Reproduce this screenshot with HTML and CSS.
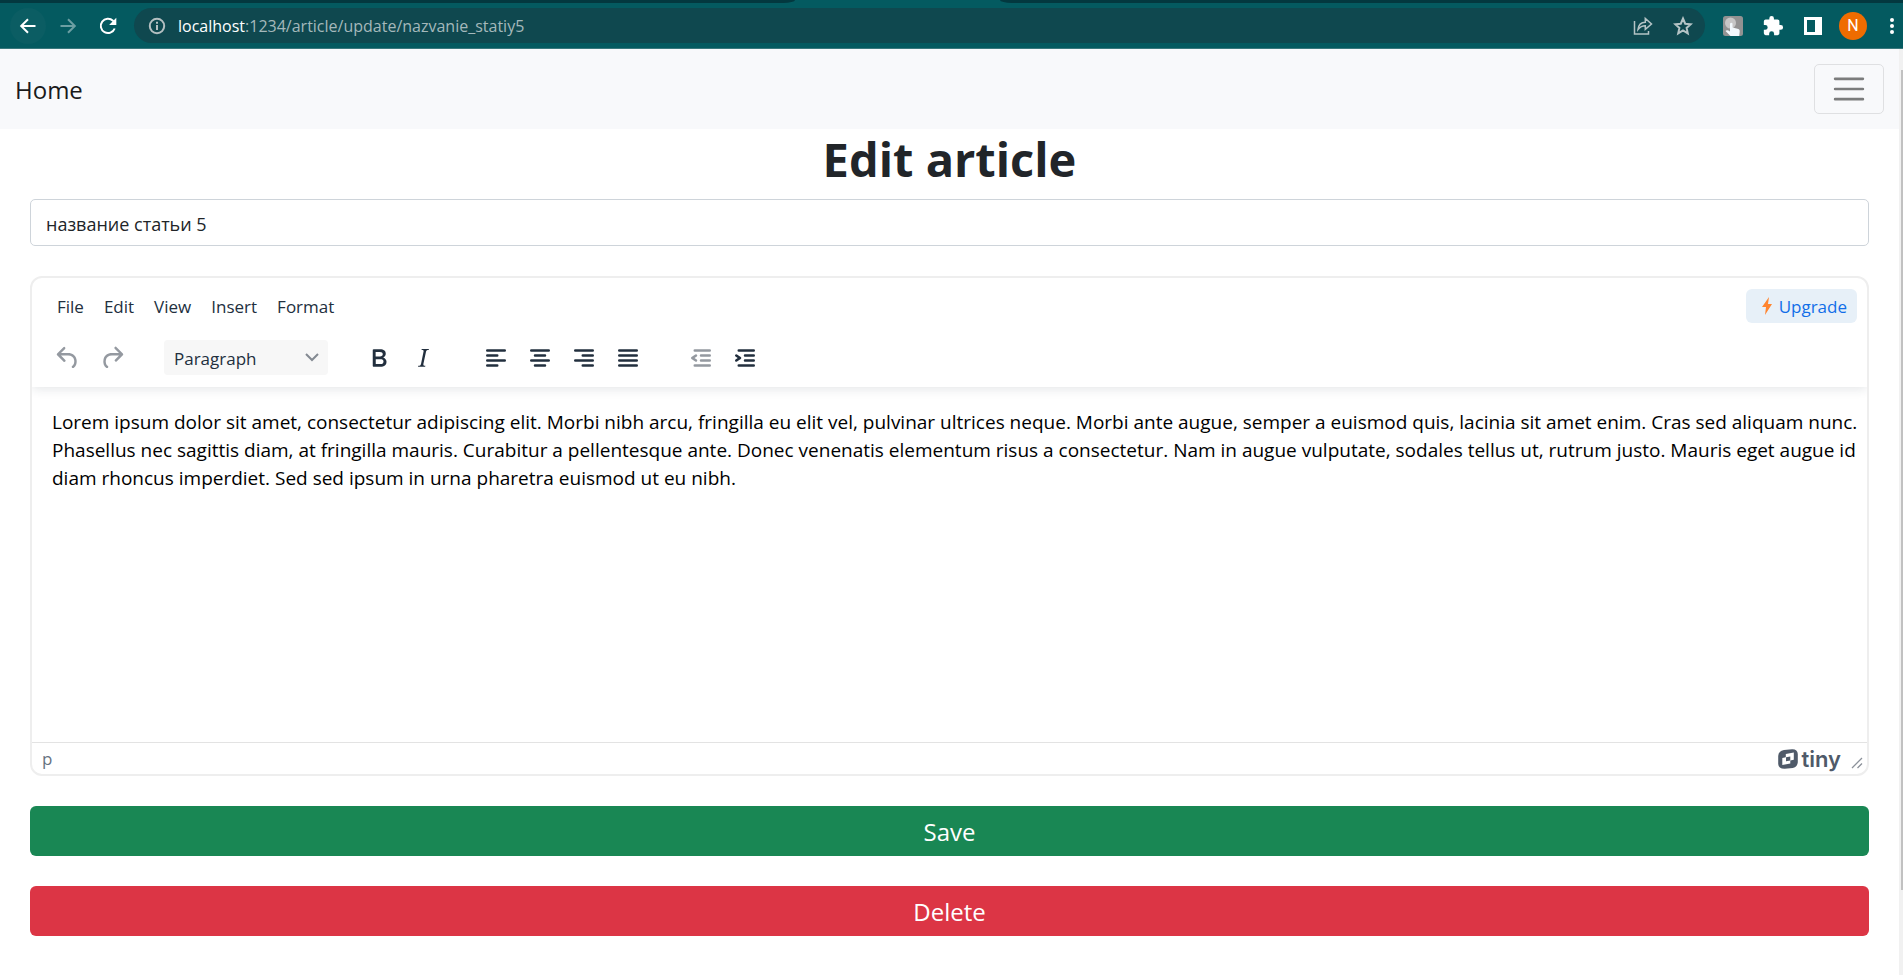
FILE: index.html
```html
<!DOCTYPE html>
<html lang="en">
<head>
<meta charset="utf-8">
<title>Edit article</title>
<link rel="stylesheet" href="styles.css">
</head>
<body>
<header class="browser">
  <div class="tabstrip"><span class="tab-left"></span><span class="tab-right"></span></div>
  <div class="chrome-bar">
    <button class="chrome-btn back" aria-label="Back"><svg width="20" height="20" viewBox="0 0 20 20"><path d="M17.500 10H4M10 3.200 3.200 10l6.800 6.800"/></svg></button>
    <button class="chrome-btn forward" aria-label="Forward"><svg width="20" height="20" viewBox="0 0 20 20"><path d="M2.500 10H16M10 3.200 16.800 10 10 16.800"/></svg></button>
    <button class="chrome-btn reload" aria-label="Reload"><svg width="20" height="20" viewBox="0 0 20 20"><path d="M16.700 12.500a7.200 7.200 0 1 1-1.700-7.800L17 6.500"/><path class="solid" d="M18.300 1.800v7.200h-7.200z"/></svg></button>
    <div class="omnibox">
      <svg class="info" width="18" height="18" viewBox="0 0 18 18"><circle cx="9" cy="9" r="7.200"/><path d="M9 8v5M9 4.800v2"/></svg>
      <span class="url"><b>localhost</b>:1234/article/update/nazvanie_statiy5</span>
      <button class="omni-btn" aria-label="Share"><svg width="20" height="20" viewBox="0 0 20 20"><path d="M1.500 5v13h14v-3M5 13.500C5.500 8.500 8.500 6.300 12.300 6.200V2.500L18.500 8l-6.200 5.300V9.800C9 9.800 7 11 5 13.500z"/></svg></button>
      <button class="omni-btn" aria-label="Bookmark"><svg width="20" height="20" viewBox="0 0 20 20"><path d="m10 2.500 2.200 5.200 5.600.5-4.200 3.700 1.200 5.500L10 14.500l-4.800 2.900 1.200-5.500-4.200-3.700 5.600-.5z"/></svg></button>
    </div>
    <button class="ext-btn" aria-label="Click extension"><svg width="22" height="22" viewBox="0 0 22 22"><rect x="1" y="1" width="20" height="20" rx="2.500" fill="#929292"/><circle cx="8.500" cy="8" r="5.500" fill="#c6c6c6"/><path d="M8 8.500q1.500-1.500 2.500 0v4l6 1.500q1.500.5 1.200 2.500l-.5 4.500H8.500L3.500 16q1.500-1.500 4.500.5z" fill="#f1f8fc"/></svg></button>
    <button class="ext-btn" aria-label="Extensions"><svg width="22" height="22" viewBox="0 0 24 24"><path fill="#fff" d="M20.500 11H19V7a2 2 0 0 0-2-2h-4V3.500a2.500 2.500 0 0 0-5 0V5H4a2 2 0 0 0-2 2v3.800h1.500a2.700 2.700 0 0 1 0 5.400H2V20a2 2 0 0 0 2 2h3.800v-1.500a2.700 2.700 0 0 1 5.400 0V22H17a2 2 0 0 0 2-2v-4h1.500a2.500 2.500 0 0 0 0-5z"/></svg></button>
    <button class="ext-btn" aria-label="Side panel"><svg width="18" height="18" viewBox="0 0 18 18"><path fill="#fff" fill-rule="evenodd" d="M0 0h18v18H0zM3 3v12h8V3z"/></svg></button>
    <button class="avatar">N</button>
    <button class="kebab" aria-label="Menu"><svg width="6" height="18" viewBox="0 0 6 18"><g fill="#fff"><circle cx="3" cy="3" r="2"/><circle cx="3" cy="9" r="2"/><circle cx="3" cy="15" r="2"/></g></svg></button>
  </div>
</header>
<div class="viewport">
  <div class="page">
    <nav class="navbar">
      <a class="brand" href="#">Home</a>
      <button class="toggler" aria-label="Toggle navigation"><svg width="38" height="38" viewBox="0 0 30 30"><path stroke="#7b7c7c" stroke-linecap="round" stroke-width="2" d="M4 7h22M4 15h22M4 23h22"/></svg></button>
    </nav>
    <main class="content">
      <h1 class="title">Edit article</h1>
      <input class="name-input" type="text" aria-label="Article name" value="название статьи 5">
      <section class="editor">
        <div class="editor-head">
          <div class="menubar">
            <button>File</button><button>Edit</button><button>View</button><button>Insert</button><button>Format</button>
            <a class="upgrade" href="#"><svg width="10" height="18" viewBox="0 0 10 18"><path fill="#ff8530" d="M7 0 0 10h4l-1 8 7-11H6z"/></svg>Upgrade</a>
          </div>
          <div class="toolbar">
            <div class="group history">
              <button disabled aria-label="Undo"><svg width="30" height="30" viewBox="0 0 24 24"><path d="M6.400 8H12c3.700 0 6.200 2 6.800 5.100.6 2.700-.4 5.600-2.300 6.800a1 1 0 0 1-1-1.800c1.100-.6 1.800-2.700 1.400-4.600-.5-2.100-2.100-3.500-4.900-3.500H6.400l3.300 3.300a1 1 0 1 1-1.400 1.400l-5-5a1 1 0 0 1 0-1.400l5-5a1 1 0 0 1 1.400 1.400L6.400 8Z"/></svg></button>
              <button disabled aria-label="Redo"><svg width="30" height="30" viewBox="0 0 24 24"><path d="M17.600 10H12c-2.800 0-4.400 1.400-4.900 3.500-.4 2 .3 4 1.400 4.600a1 1 0 1 1-1 1.800c-2-1.200-2.900-4.100-2.300-6.800.6-3 3-5.100 6.800-5.100h5.600l-3.300-3.300a1 1 0 1 1 1.400-1.400l5 5a1 1 0 0 1 0 1.400l-5 5a1 1 0 0 1-1.400-1.400l3.300-3.300Z"/></svg></button>
            </div>
            <select class="format" aria-label="Block format"><option>Paragraph</option></select>
            <div class="group">
              <button aria-label="Bold"><svg width="30" height="30" viewBox="0 0 24 24"><path fill-rule="evenodd" d="M7.800 19c-.3 0-.5 0-.6-.2l-.2-.5V5.700c0-.2 0-.4.2-.5l.6-.2h5c1.500 0 2.700.3 3.500 1 .7.600 1.100 1.400 1.100 2.500a3 3 0 0 1-.6 1.900c-.4.600-1 1-1.600 1.200.4.100.9.300 1.300.6s.8.700 1 1.200c.4.400.5 1 .5 1.600 0 1.300-.4 2.300-1.300 3-.8.700-2.100 1-3.800 1H7.800Zm5-8.300c.6 0 1.200-.1 1.600-.5.400-.3.600-.7.600-1.300 0-1.100-.8-1.700-2.300-1.700H9.300v3.500h3.400Zm.5 6c.7 0 1.300-.1 1.700-.4.400-.4.600-.9.600-1.500s-.2-1-.7-1.400c-.4-.3-1-.4-2-.4H9.400v3.800h4Z"/></svg></button>
              <button aria-label="Italic"><svg width="30" height="30" viewBox="0 0 24 24"><path fill-rule="evenodd" d="m16.700 4.700-.1.900h-.3c-.6 0-1 0-1.400.3-.3.300-.4.600-.5 1.100l-2.100 9.800v.6c0 .5.400.8 1.400.8h.2l-.2.800H8l.2-.8h.2c1.100 0 1.800-.5 2-1.500l2-9.800.1-.5c0-.6-.4-.8-1.400-.8h-.3l.2-.9h5.800Z"/></svg></button>
            </div>
            <div class="group">
              <button aria-label="Align left"><svg width="30" height="30" viewBox="0 0 24 24"><path d="M5 5h14a1 1 0 0 1 0 2H5a1 1 0 1 1 0-2Zm0 4h8a1 1 0 0 1 0 2H5a1 1 0 1 1 0-2Zm0 8h8a1 1 0 0 1 0 2H5a1 1 0 0 1 0-2Zm0-4h14a1 1 0 0 1 0 2H5a1 1 0 0 1 0-2Z"/></svg></button>
              <button aria-label="Align center"><svg width="30" height="30" viewBox="0 0 24 24"><path d="M5 5h14a1 1 0 0 1 0 2H5a1 1 0 1 1 0-2Zm3 4h8a1 1 0 0 1 0 2H8a1 1 0 1 1 0-2Zm0 8h8a1 1 0 0 1 0 2H8a1 1 0 0 1 0-2Zm-3-4h14a1 1 0 0 1 0 2H5a1 1 0 0 1 0-2Z"/></svg></button>
              <button aria-label="Align right"><svg width="30" height="30" viewBox="0 0 24 24"><path d="M5 5h14a1 1 0 0 1 0 2H5a1 1 0 1 1 0-2Zm6 4h8a1 1 0 0 1 0 2h-8a1 1 0 0 1 0-2Zm0 8h8a1 1 0 0 1 0 2h-8a1 1 0 0 1 0-2Zm-6-4h14a1 1 0 0 1 0 2H5a1 1 0 0 1 0-2Z"/></svg></button>
              <button aria-label="Justify"><svg width="30" height="30" viewBox="0 0 24 24"><path d="M5 5h14a1 1 0 0 1 0 2H5a1 1 0 1 1 0-2Zm0 4h14a1 1 0 0 1 0 2H5a1 1 0 1 1 0-2Zm0 4h14a1 1 0 0 1 0 2H5a1 1 0 0 1 0-2Zm0 4h14a1 1 0 0 1 0 2H5a1 1 0 0 1 0-2Z"/></svg></button>
            </div>
            <div class="group">
              <button disabled aria-label="Decrease indent"><svg width="30" height="30" viewBox="0 0 24 24"><path d="M7 5h12a1 1 0 0 1 0 2H7a1 1 0 1 1 0-2Zm5 4h7a1 1 0 0 1 0 2h-7a1 1 0 0 1 0-2Zm0 4h7a1 1 0 0 1 0 2h-7a1 1 0 0 1 0-2Zm-5 4h12a1 1 0 0 1 0 2H7a1 1 0 0 1 0-2Zm1.600-3.800a1 1 0 0 1-1.200 1.600l-3-2a1 1 0 0 1 0-1.600l3-2a1 1 0 0 1 1.200 1.600L6.800 12l1.800 1.200Z"/></svg></button>
              <button aria-label="Increase indent"><svg width="30" height="30" viewBox="0 0 24 24"><path d="M7 5h12a1 1 0 0 1 0 2H7a1 1 0 1 1 0-2Zm5 4h7a1 1 0 0 1 0 2h-7a1 1 0 0 1 0-2Zm0 4h7a1 1 0 0 1 0 2h-7a1 1 0 0 1 0-2Zm-5 4h12a1 1 0 0 1 0 2H7a1 1 0 0 1 0-2Zm-2.600-3.800L6.200 12l-1.800-1.200a1 1 0 0 1 1.200-1.600l3 2a1 1 0 0 1 0 1.600l-3 2a1 1 0 1 1-1.200-1.600Z"/></svg></button>
            </div>
          </div>
        </div>
        <div class="editor-body">
          <p>Lorem ipsum dolor sit amet, consectetur adipiscing elit. Morbi nibh arcu, fringilla eu elit vel, pulvinar ultrices neque. Morbi ante augue, semper a euismod quis, lacinia sit amet enim. Cras sed aliquam nunc. Phasellus nec sagittis diam, at fringilla mauris. Curabitur a pellentesque ante. Donec venenatis elementum risus a consectetur. Nam in augue vulputate, sodales tellus ut, rutrum justo. Mauris eget augue id diam rhoncus imperdiet. Sed sed ipsum in urna pharetra euismod ut eu nibh.</p>
        </div>
        <footer class="statusbar">
          <span class="path">p</span>
          <a class="tiny" href="#"><svg width="20" height="20" viewBox="0 0 20 20"><path fill="#4f5a69" fill-rule="evenodd" d="M6 1 14 .2Q19.500 0 19.800 5v8q-.2 5-5 6l-8 .8Q.5 20 .2 15V7Q.5 2 6 1zM7.800 5v3.200L4.300 9v7l8-1.400v-3.200l3.500-.7V3.600z"/><path fill="#4f5a69" d="m8 8.200 4.300-.8v4L8 12.200z"/></svg>tiny</a>
          <svg class="grip" width="12" height="12" viewBox="0 0 12 12"><path stroke="#8b919a" stroke-width="1.300" d="m1 11 10-10M6.500 11 11 6.500"/></svg>
        </footer>
      </section>
      <button class="action save">Save</button>
      <button class="action delete">Delete</button>
    </main>
  </div>
  <div class="scrollbar"><div class="thumb"></div></div>
</div>
</body>
</html>
```
FILE: styles.css
```css
* { box-sizing: border-box; }
body {
  margin: 0;
  min-height: 100vh;
  display: flex;
  flex-direction: column;
  background: #fff;
  color: #212529;
  font-family: "Segoe UI", "Open Sans", "Noto Sans", sans-serif;
}
button, input, select { font: inherit; color: inherit; }
button { border: 0; padding: 0; background: none; }
a { color: inherit; text-decoration: none; }
svg { display: block; fill: none; flex: none; }

.browser { background: #045a60; border-bottom: 1px solid #39787d; }
.tabstrip { height: 3px; display: flex; gap: 205px; }
.tab-left { flex: 795; background: #03383f; border-bottom-right-radius: 12px 3px; }
.tab-right { flex: 903; background: #03383f; border-bottom-left-radius: 12px 3px; }
.chrome-bar { display: flex; align-items: center; height: 45px; padding: 0 8px 0 10px; }
.chrome-btn { display: grid; place-items: center; width: 36px; height: 36px; border-radius: 50%; }
.chrome-btn svg { stroke: #fff; stroke-width: 2; }
.chrome-btn .solid { fill: #fff; stroke: none; }
.back { background: #0b5d63; }
.forward { margin: 0 4px; }
.forward svg { stroke: #6c9fa3; }
.omnibox {
  flex: 1;
  display: flex;
  align-items: center;
  height: 35px;
  margin: 0 8px;
  padding: 0 12px 0 14px;
  border-radius: 18px;
  background: #0f484f;
  color: #a4b8bb;
  font-size: 16px;
}
.info { stroke: #b4bfc1; stroke-width: 2; }
.url { flex: 1; margin-left: 12px; }
.url b { font-weight: 400; color: #fff; }
.omni-btn { width: 40px; display: grid; place-items: center; }
.omni-btn + .omni-btn { margin-right: -10px; }
.omni-btn svg { stroke: #b4c3c5; stroke-width: 2; }
.omni-btn:first-of-type svg { stroke-width: 1.5; }
.ext-btn { width: 40px; display: grid; place-items: center; }
.avatar {
  width: 28px;
  height: 28px;
  margin-left: 6px;
  border-radius: 50%;
  background: #ef6c00;
  color: #fff;
  font: 16px Roboto, sans-serif;
}
.kebab { margin-left: 22px; }

.viewport { flex: 1; display: flex; }
.page { flex: 1; min-width: 0; }
.scrollbar { width: 4px; background: #f1f1f1; padding: 21px 0 0 2px; }
.thumb { height: 820px; background: #c1c1c1; }

.navbar {
  display: flex;
  align-items: center;
  justify-content: space-between;
  height: 80px;
  padding: 0 15px;
  background: #f8f9fb;
}
.brand { font-size: 24px; color: #1a1a1a; }
.toggler {
  display: grid;
  place-items: center;
  width: 70px;
  height: 50px;
  border: 1px solid #dfe0e2;
  border-radius: 5px;
}

.content { display: flex; flex-direction: column; padding: 0 30px 30px; }
.title { margin: 0 0 10px; font-size: 47px; line-height: 60px; font-weight: 700; text-align: center; }
.name-input {
  width: 100%;
  height: 47px;
  padding: 2px 15px 0;
  border: 1px solid #ced4da;
  border-radius: 5px;
  font-size: 18px;
}
.editor {
  display: flex;
  flex-direction: column;
  height: 500px;
  margin: 30px 0;
  border: 2px solid #eee;
  border-radius: 12px;
  overflow: hidden;
}
.editor-head { padding: 10px 10px 11px; box-shadow: 0 2px 10px rgba(34, 47, 62, .12); }
.menubar { display: flex; align-items: center; height: 36px; margin-bottom: 15px; padding-left: 5px; color: #222f3e; font-size: 17px; }
.menubar button { padding: 0 10px; }
.upgrade {
  display: flex;
  align-items: center;
  gap: 7px;
  height: 34px;
  margin-left: auto;
  padding: 0 10px 0 16px;
  border-radius: 6px;
  background: #e7f0f8;
  color: #116ee8;
}
.toolbar { display: flex; align-items: center; height: 37px; padding-left: 4px; }
.group { display: flex; margin-left: 29px; }
.group button { width: 44px; display: grid; place-items: center; }
.group svg { fill: #222f3e; }
.group button:disabled svg { fill: #9499a0; }
.history { margin: 0 30px 0 0; }
.format {
  appearance: none;
  width: 164px;
  height: 35px;
  padding: 2px 10px 0;
  border: 0;
  border-radius: 4px;
  color: #222f3e;
  font-size: 17px;
  background: #f7f7f7 url("data:image/svg+xml,%3Csvg xmlns='http://www.w3.org/2000/svg' width='14' height='9'%3E%3Cpath d='M1 1l6 6 6-6' fill='none' stroke='%23848a92' stroke-width='2'/%3E%3C/svg%3E") no-repeat right 9px center;
}
.editor-body { flex: 1; padding: 21px 2px 20px 20px; color: #000; font-size: 19px; line-height: 28px; }
.editor-body p { margin: 0; }
.statusbar {
  display: flex;
  align-items: center;
  height: 32px;
  padding: 0 4px 0 10px;
  border-top: 1px solid #e3e3e3;
  color: #677280;
  font-size: 17px;
}
.tiny { display: flex; align-items: center; gap: 3px; margin-left: auto; color: #4f5a69; font: 600 22px/28px Inter, sans-serif; }
.grip { margin: 8px 0 0 10px; }
.action {
  height: 50px;
  border-radius: 6px;
  color: #fff;
  font-size: 24px;
}
.save { background: #198754; }
.delete { margin-top: 30px; background: #dc3545; }
```
